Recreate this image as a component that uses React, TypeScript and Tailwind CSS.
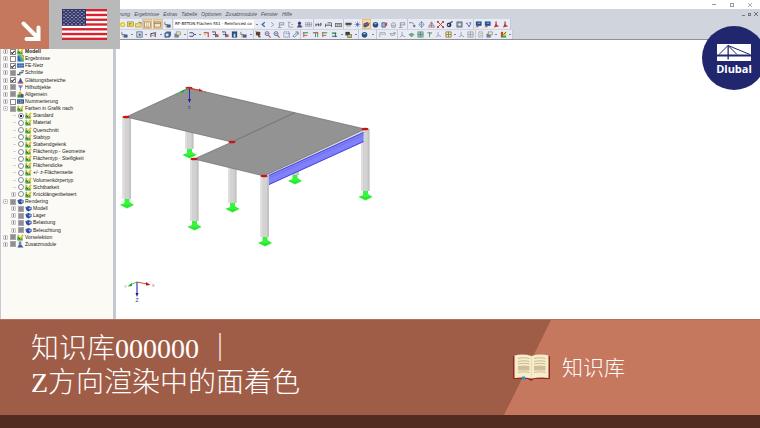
import React, { useState } from "react";
import clsx from "clsx";

const glyphs: Record<string, React.ReactNode> = {
  disc: (
    <>
      <circle cx="3" cy="4" r="3" fill="#e5c83a" />
      <circle cx="3" cy="4" r="1" fill="#fff" />
    </>
  ),
  note: (
    <>
      <rect x="0.5" y="1" width="7" height="5" fill="#f0d650" stroke="#8c7a22" strokeWidth="0.6" />
      <path d="M2 3h3M2 4.500h2" stroke="#4b5f9a" strokeWidth="0.7" />
      <path d="M4 6l2 2V6z" fill="#e5c83a" />
    </>
  ),
  folder: (
    <>
      <path d="M0.500 7V3h2.500l1-1h3v5z" fill="#f3dc66" stroke="#9a8426" strokeWidth="0.6" />
      <path d="M4 1.500h3v1.500" stroke="#5d6c9c" fill="none" strokeWidth="0.7" />
    </>
  ),
  panes: (
    <>
      <rect x="0.5" y="1" width="7" height="6" fill="#f7f0df" stroke="#8a7451" strokeWidth="0.7" />
      <path d="M3 1v6M5 1v6" stroke="#b59a6c" strokeWidth="0.6" />
    </>
  ),
  sheet: (
    <>
      <rect x="0.5" y="1" width="7" height="6" fill="#f4e6c8" stroke="#8a7451" strokeWidth="0.7" />
      <path d="M0.500 2.500h7" stroke="#7b6a4e" strokeWidth="1" />
    </>
  ),
  load: (
    <>
      <path d="M1 1v3h3" stroke="#56627d" fill="none" strokeWidth="0.9" />
      <rect x="3" y="4" width="4.500" height="3.500" fill="#3c5c9c" />
      <circle cx="2.500" cy="6" r="1.200" fill="#e0b32e" />
    </>
  ),
  left: <path d="M5.500 1.500L2.500 4l3 2.500" stroke="#3565ba" strokeWidth="1.400" fill="none" />,
  right: <path d="M2.500 1.500l3 2.500-3 2.500" stroke="#7b9dd8" strokeWidth="1.100" fill="none" />,
  frame: (
    <path d="M1.500 7V2h5M6.500 2v2.500h-5M0 7.500h4" stroke="#7c8595" strokeWidth="0.900" fill="none" />
  ),
  angle: (
    <path d="M1 1.500h3M2 1.500v5.500h5M5 4h2" stroke="#8d95a3" strokeWidth="0.900" fill="none" />
  ),
  person: (
    <>
      <circle cx="4" cy="2.500" r="1.800" fill="#313f78" />
      <path d="M1 7.500l2-3.500h2l2 3.500z" fill="#404b82" />
      <path d="M5 6h2.500" stroke="#c8463f" strokeWidth="1" />
    </>
  ),
  table: (
    <path d="M0.500 2h7v4h-7zM0.500 4h7M3 2v4M5 2v4" stroke="#838c9b" strokeWidth="0.700" fill="none" />
  ),
  link: (
    <path d="M1 3v3M1 5l3-2v3M5 5l2-3M6 6l1.500-3" stroke="#3d4961" strokeWidth="1" fill="none" />
  ),
  bed: (
    <>
      <path d="M0.500 3v4M7.500 2v5M0.500 5h7M3 2h4" stroke="#434d60" strokeWidth="0.900" fill="none" />
      <rect x="2" y="3" width="4" height="2" fill="#a9b2a0" />
    </>
  ),
  ruler: (
    <>
      <rect x="0.500" y="3" width="7" height="3.500" fill="#c7c9bd" stroke="#525c66" strokeWidth="0.800" />
      <path d="M3 3v2M5 3v2" stroke="#525c66" strokeWidth="0.600" />
    </>
  ),
  tray: (
    <>
      <rect x="0.500" y="2" width="7" height="2.500" fill="#3f4857" />
      <rect x="1.500" y="4.500" width="5" height="2" fill="#c4b682" />
    </>
  ),
  star: (
    <>
      <path d="M4 0.500v7M0.500 4h7M1.500 1.500l5 5M6.500 1.500l-5 5" stroke="#8991c9" strokeWidth="0.800" />
      <circle cx="4" cy="4" r="1.300" fill="#4b57a2" />
    </>
  ),
  solid: (
    <>
      <path d="M0.500 3l4-2 3 1.500-1 3-4 2-2-1z" fill="#35588f" />
      <path d="M0.500 3l3 1 4-1.500" stroke="#d7683d" strokeWidth="0.900" fill="none" />
    </>
  ),
  ball: (
    <>
      <circle cx="4" cy="4.200" r="3.200" fill="#2a4c83" />
      <path d="M2 3l2-1 2 1-2 1z" fill="#9ec2e4" />
    </>
  ),
  paint: (
    <>
      <path d="M1 2h4v5H1z" fill="#a3b6d4" stroke="#2d477c" strokeWidth="0.800" />
      <path d="M4 4l3-3v5z" fill="#c8473b" />
    </>
  ),
  home: (
    <path d="M1 4l3-2.500L7 4M2 4v3h4V4M3 5h2" stroke="#7c858c" strokeWidth="0.900" fill="none" />
  ),
  curve: (
    <>
      <path d="M1 2q5-1 5 4" stroke="#8088a0" strokeWidth="1" fill="none" />
      <path d="M4 5h4l-2 2.500z" fill="#526098" />
      <path d="M0 2h2" stroke="#d06554" strokeWidth="0.900" />
    </>
  ),
  target: (
    <>
      <circle cx="4" cy="4" r="2.500" fill="none" stroke="#7286ba" strokeWidth="0.800" />
      <path d="M4 0v8" stroke="#466ab1" strokeWidth="0.700" />
      <path d="M0.500 4h7" stroke="#93a0bd" strokeWidth="0.700" />
    </>
  ),
  tent: (
    <>
      <path d="M0.500 7L4 1l3.500 6z" fill="none" stroke="#a05c66" strokeWidth="0.800" />
      <path d="M4 1v6M2 5h4" stroke="#5d6686" strokeWidth="0.700" />
    </>
  ),
  cross: (
    <>
      <path d="M1 1l6 6M7 1L1 7" stroke="#cd3b38" strokeWidth="1.100" />
      <path d="M0 0h2v2H0zM6 0h2v2H6zM0 6h2v2H0zM6 6h2v2H6z" fill="#8b4a52" />
    </>
  ),
  lens: (
    <>
      <circle cx="3.500" cy="4.500" r="2.700" fill="#25345e" />
      <circle cx="3" cy="4.500" r="1" fill="#d9e1ee" />
      <path d="M5 2l2.500-1.500" stroke="#25345e" strokeWidth="1.200" />
    </>
  ),
  gear: (
    <>
      <rect x="1" y="1" width="6" height="6" fill="#8d96a7" stroke="#4e5a6c" strokeWidth="0.700" />
      <circle cx="4" cy="4" r="1.500" fill="#e4e9ef" />
    </>
  ),
  fan: (
    <>
      <path d="M0.500 2h3l-1 2zM4.500 1.500h3L6 4zM3 5h3L4.500 7.500z" fill="#6a7fc2" />
      <path d="M2 3l3 3 1.500-3" stroke="#3f5188" strokeWidth="0.700" fill="none" />
    </>
  ),
  view: (
    <>
      <rect x="1" y="0.500" width="6.500" height="5" fill="#234d8c" />
      <path d="M3 2.500h3" stroke="#9fd0f1" strokeWidth="1" />
      <path d="M0 7h4V5z" fill="#c94a42" />
    </>
  ),
  pin: (
    <>
      <path d="M3.500 0.500v5" stroke="#762a39" strokeWidth="1.200" />
      <path d="M1 7.500l2-4 4 2.500z" fill="#cf2b31" />
    </>
  ),
  box: (
    <>
      <rect x="1" y="1" width="6" height="6" fill="#e3e8f1" stroke="#4a5876" strokeWidth="0.900" />
      <rect x="3" y="3" width="2.500" height="2.500" fill="#566a94" />
    </>
  ),
  member: (
    <>
      <path d="M1 7V3l5-1v5" stroke="#3a4863" strokeWidth="1.100" fill="none" />
      <path d="M1 3l3 3 3-5" stroke="#b6533f" strokeWidth="0.700" fill="none" />
    </>
  ),
  cube: (
    <>
      <path d="M1 2.500L3 1h4.500v4.500L6 7H1z" fill="#4b699e" stroke="#273c68" strokeWidth="0.700" />
      <rect x="2" y="3" width="3" height="3" fill="#d9e4f3" />
    </>
  ),
  cards: (
    <>
      <rect x="0.500" y="3" width="5" height="4.500" fill="#6c83ac" />
      <rect x="2.500" y="1" width="5" height="3.500" fill="#efe2a2" stroke="#6d7180" strokeWidth="0.600" />
    </>
  ),
  plug: <path d="M0.500 2h4q2.500 2 0 4h-4M6 4h2" stroke="#3a4b6e" strokeWidth="1.100" fill="none" />,
  hook: (
    <>
      <path d="M1 2h5v5" stroke="#c03c37" strokeWidth="1.200" fill="none" />
      <path d="M1 2l2 3" stroke="#e0a53b" strokeWidth="1" />
    </>
  ),
  node: (
    <>
      <path d="M1 1h3v6M1 4h5" stroke="#4a62a0" strokeWidth="1.100" fill="none" />
      <rect x="4.500" y="4" width="3" height="3" fill="#c4583f" />
      <path d="M0 1h2" stroke="#e05c3b" strokeWidth="1.200" />
    </>
  ),
  door: (
    <>
      <rect x="1" y="0.500" width="6" height="7" fill="#2e4a7b" />
      <path d="M3 7V3h2v4" fill="#c9d8ef" />
    </>
  ),
  select: (
    <>
      <path d="M1 1h5v4H1z" fill="#63402b" />
      <path d="M3 3l4 4H4z" fill="#3c3f49" />
      <path d="M0 0.500h4" stroke="#aa8c55" strokeWidth="0.700" />
    </>
  ),
  zoom: (
    <>
      <circle cx="3.500" cy="3" r="2.300" fill="#d4e0f4" stroke="#4561a3" strokeWidth="0.900" />
      <path d="M5 5l2.500 2.500" stroke="#c24b3d" strokeWidth="1.300" />
      <path d="M2 3h3" stroke="#b9453f" strokeWidth="0.700" />
    </>
  ),
  dashed: (
    <path d="M1 1h6v6H1zM3 3h5v5" stroke="#6277a5" strokeWidth="0.900" strokeDasharray="1.500 0.700" fill="none" />
  ),
  clip: (
    <path d="M1 6l4-4 2 1-4 4zM4 1h3v3" stroke="#637296" strokeWidth="0.900" fill="none" />
  ),
  axisG: (
    <>
      <path d="M1 2h6" stroke="#38a25b" strokeWidth="1.300" />
      <path d="M2 2v5M2 5h4" stroke="#d0453d" strokeWidth="1" />
    </>
  ),
  axisR: (
    <>
      <path d="M1 2h6" stroke="#d0453d" strokeWidth="1.300" />
      <path d="M4 2v5M6.500 2v5" stroke="#2c8d62" strokeWidth="1" />
    </>
  ),
  flag: (
    <>
      <path d="M1 1.500h5v2H1z" fill="#42aa67" />
      <path d="M5 2v5M1 6h6" stroke="#3c4b6f" strokeWidth="1" />
    </>
  ),
  hatch: (
    <>
      <rect x="0.500" y="1" width="5" height="4" fill="#31384a" />
      <path d="M3 4h4.500v3.500H3z" fill="#cbbd68" stroke="#45442c" strokeWidth="0.600" />
    </>
  ),
  arch: <path d="M1 7V2h6v3M3 4h2" stroke="#9b9098" strokeWidth="0.900" fill="none" />,
  cup: <path d="M1 3h6l-1.500 2h-3zM5 2h3" stroke="#8e96a0" strokeWidth="0.900" fill="none" />,
  triad: (
    <path d="M3.500 1v4L1 7M3.500 5L7 6.500" stroke="#8b90b5" strokeWidth="0.900" fill="none" />
  ),
  gem: (
    <>
      <path d="M0.500 4L4 2l3.500 2L4 7z" fill="#57a890" />
      <path d="M2 3l2 2 2-2" stroke="#d7a03c" strokeWidth="0.800" fill="none" />
    </>
  ),
  mesh: (
    <>
      <rect x="1" y="1" width="6" height="6" fill="#9fc3a2" stroke="#4d8a6c" strokeWidth="0.700" />
      <path d="M1 4h6M4 1v6" stroke="#3d72a4" strokeWidth="0.700" />
    </>
  ),
  post: <path d="M4 1.500V7M1.500 2h5L5 4" stroke="#57917a" strokeWidth="1" fill="none" />,
  grid: (
    <>
      <path d="M1 1h6v6H1zM1 4h6M4 1v6" stroke="#8a8354" strokeWidth="1" fill="#efe8a8" />
    </>
  ),
  gridGray: (
    <path d="M1 1h6v6H1zM1 4h6M4 1v6" stroke="#949cae" strokeWidth="0.900" fill="#e2e6ee" />
  ),
  page: (
    <path d="M2 1h4.500v6H2zM3 3h2.500M3 5h2.500" stroke="#979da2" strokeWidth="0.800" fill="#eceeed" />
  ),
  swatch: (
    <>
      <path d="M1 1h2.500v6H1z" fill="#d5362f" />
      <path d="M1 5h6v2.500H1z" fill="#3ba343" />
      <path d="M3 3l4-2v4H4z" fill="#e7cf34" />
      <path d="M4 4l3-3" stroke="#333" strokeWidth="0.800" />
    </>
  ),
  pencil: (
    <>
      <path d="M0.500 1h2v6h-2z" fill="#8fc65a" />
      <path d="M0.500 4h6v3.500h-6z" fill="#4fa845" />
      <path d="M3 5.500L7 1" stroke="#e8c22f" strokeWidth="2" />
      <path d="M1.500 4l2 2" stroke="#2f3a22" strokeWidth="1.100" />
    </>
  ),
  rainbow: (
    <>
      <rect x="0.500" y="0.500" width="7" height="7" fill="#2f63c8" />
      <path d="M2 0.500h5.500v7H5z" fill="#43bb6b" />
      <path d="M4.500 0.500h3v5z" fill="#ecd940" />
      <path d="M6 0.500h1.500v2z" fill="#dc4a34" />
    </>
  ),
  blueMesh: (
    <>
      <rect x="0" y="1.500" width="8" height="5" fill="#3c68ae" />
      <path d="M0 4h8M3 1.500v5M5.500 1.500v5" stroke="#8db4e2" strokeWidth="0.500" />
    </>
  ),
  section: (
    <>
      <path d="M1 7l2-4h5L6 5H4z" fill="#5b6f9a" />
      <path d="M0 6.500h4M5 2h3" stroke="#293a62" strokeWidth="1" />
    </>
  ),
  smooth: (
    <>
      <path d="M0.500 6.500q2-1 3-5h1q1 4 3 5z" fill="#425195" />
      <path d="M1 7h6" stroke="#bd4954" strokeWidth="1.200" />
    </>
  ),
  helper: (
    <>
      <path d="M1 1.500h6L5 4.500H3z" fill="#7e8dd3" />
      <path d="M4 3v4.500" stroke="#6074bd" strokeWidth="1" />
    </>
  ),
  general: (
    <>
      <circle cx="3.500" cy="2.500" r="1.800" fill="#d2a928" />
      <rect x="0.500" y="4" width="4" height="3.500" fill="#38923f" />
      <rect x="4.500" y="3.500" width="3" height="4" fill="#2e54a1" />
    </>
  ),
  numbers: (
    <>
      <rect x="0" y="1.500" width="8" height="5" fill="#2f578e" />
      <path d="M1.500 3v2.500M3 3h1.500v2H3M6 3v2.500" stroke="#d7e4f2" strokeWidth="0.600" fill="none" />
    </>
  ),
  render: (
    <>
      <path d="M0.500 2.500L4 1l3.500 1.500v3L4 7.500 1.500 6z" fill="#2948a0" />
      <path d="M4 3.500l2.500-1 .5 2-2 1z" fill="#9db7e8" />
      <path d="M0.500 2.500L4 3.500" stroke="#5f7fcc" strokeWidth="0.600" />
    </>
  ),
  modules: (
    <>
      <path d="M2 0.500h3v4H2z" fill="#6f86c7" />
      <path d="M0.500 7.500l1.500-3h3l2.500 3z" fill="#41589e" />
    </>
  ),
};

const Glyph = ({ name }: { name: string }) => (
  <svg viewBox="0 0 8 8" className="h-[7px] w-[7px] shrink-0" aria-hidden="true">
    {glyphs[name]}
  </svg>
);

const menu = ["Ergebnisse", "Extras", "Tabelle", "Optionen", "Zusatzmodule", "Fenster", "Hilfe"];

type Group = { width: string; items: string[]; active?: string[] };

const files: Group[] = [
  { width: "w-[23px]", items: ["disc", "note", "folder"] },
  { width: "w-[20px]", items: ["panes", "sheet"], active: ["panes", "sheet"] },
  { width: "w-[10px]", items: ["load"] },
];

const display: Group[] = [
  { width: "w-[55px]", items: ["left", "right", "frame", "angle", "person", "table"] },
  { width: "w-[30px]", items: ["link", "bed", "ruler"] },
  {
    width: "w-[64px]",
    items: ["tray", "star", "solid", "ball", "paint", "home", "frame"],
    active: ["solid"],
  },
  { width: "w-[66px]", items: ["curve", "target", "tent", "cross", "lens", "gear", "fan"] },
  { width: "w-[37px]", items: ["view", "view", "pin", "pin"] },
];

// "v" is the small arrow next to a tool that opens a list
const tools: Group[] = [
  { width: "w-[68px]", items: ["load", "v", "box", "v", "member", "v", "cube", "cards", "v"] },
  { width: "w-[66px]", items: ["plug", "v", "hook", "node", "node", "door", "load", "v"] },
  { width: "w-[47px]", items: ["select", "zoom", "zoom", "dashed", "clip"] },
  { width: "w-[58px]", items: ["axisG", "axisR", "axisG", "flag", "v", "hatch", "v"] },
  { width: "w-[18px]", items: ["ball", "v"] },
  { width: "w-[21px]", items: ["arch", "cup"] },
  {
    width: "w-[78px]",
    items: ["triad", "gem", "mesh", "post", "triad", "grid", "v", "triad", "gridGray"],
  },
  { width: "w-[37px]", items: ["page", "cards", "v", "swatch", "v"] },
];

const ToolGroup = ({ group }: { group: Group }) => (
  <div
    className={clsx(
      "flex shrink-0 items-center justify-around border-r border-[#c3c9d6]",
      group.width
    )}
  >
    {group.items.map((item, i) =>
      item === "v" ? (
        <button key={i} type="button" aria-label="Liste" className="h-px w-[2px] bg-[#7b8291]" />
      ) : (
        <button
          key={i}
          type="button"
          aria-label={item}
          className={clsx(
            "flex h-[8px] items-center",
            group.active?.includes(item) && "bg-[#fbd99e] outline outline-[#e6bd82]"
          )}
        >
          <Glyph name={item} />
        </button>
      )
    )}
  </div>
);

type Row = {
  label: string;
  icon: string;
  state: "on" | "off" | "mixed" | "radio";
  sub?: boolean;
  open?: boolean;
  leaf?: boolean;
};

const colorModes = [
  "Standard",
  "Material",
  "Querschnitt",
  "Stabtyp",
  "Stabendgelenk",
  "Flächentyp - Geometrie",
  "Flächentyp - Steifigkeit",
  "Flächendicke",
  "+/- z-Flächenseite",
  "Volumenkörpertyp",
  "Sichtbarkeit",
  "Knicklängenbeiwert",
];

const rows: Row[] = [
  { label: "Modell", icon: "pencil", state: "on" },
  { label: "Ergebnisse", icon: "rainbow", state: "off" },
  { label: "FE-Netz", icon: "blueMesh", state: "on" },
  { label: "Schnitte", icon: "section", state: "mixed" },
  { label: "Glättungsbereiche", icon: "smooth", state: "on" },
  { label: "Hilfsobjekte", icon: "helper", state: "mixed" },
  { label: "Allgemein", icon: "general", state: "mixed" },
  { label: "Nummerierung", icon: "numbers", state: "off" },
  { label: "Farben in Grafik nach", icon: "pencil", state: "mixed", open: true },
  ...colorModes.map(
    (label): Row => ({
      label,
      icon: "pencil",
      state: "radio",
      sub: true,
      leaf: label !== "Knicklängenbeiwert",
    })
  ),
  { label: "Rendering", icon: "render", state: "mixed", open: true },
  { label: "Modell", icon: "render", state: "mixed", sub: true },
  { label: "Lager", icon: "render", state: "mixed", sub: true },
  { label: "Belastung", icon: "render", state: "mixed", sub: true },
  { label: "Beleuchtung", icon: "render", state: "mixed", sub: true },
  { label: "Vorselektion", icon: "pencil", state: "mixed" },
  { label: "Zusatzmodule", icon: "modules", state: "mixed" },
];

const Navigator = () => {
  const [mode, setMode] = useState("Standard");

  return (
    <aside className="w-[116px] shrink-0 border-r-3 border-l border-r-[#c3c8d1] border-l-[#cfc6d4] bg-[#fbfaf4] pt-[8px]">
      <ul className="grid h-[200px] auto-rows-fr pl-[2px]">
        {rows.map((row, i) => (
          <li
            key={i}
            className={clsx("flex min-h-0 items-center gap-[2px]", row.sub && "pl-[8px]")}
          >
            {row.leaf ? (
              <span className="ml-[2px] h-px w-[3px] bg-[#d5d5d5]" />
            ) : (
              <button
                type="button"
                aria-label="Zweig"
                className="flex h-[5px] w-[5px] items-center justify-center rounded-[1px] border border-[#c8c8cc] bg-[#f2f2f2]"
              >
                <span className={clsx("w-px bg-[#888]", row.open ? "h-px" : "h-[3px]")} />
              </button>
            )}
            <label className="flex items-center gap-px">
              {row.state === "radio" ? (
                <input
                  type="radio"
                  name="mode"
                  checked={mode === row.label}
                  onChange={() => setMode(row.label)}
                  className="flex h-[6px] w-[6px] appearance-none items-center justify-center rounded-full border border-[#858b98] bg-white checked:before:h-[2px] checked:before:w-[2px] checked:before:bg-[#1c2536]"
                />
              ) : (
                <input
                  type="checkbox"
                  defaultChecked={row.state === "on"}
                  className={clsx(
                    "flex h-[6px] w-[6px] appearance-none items-center justify-center border",
                    "checked:before:h-[4px] checked:before:w-[2px] checked:before:rotate-45 checked:before:border-r checked:before:border-b checked:before:border-[#222]",
                    row.state === "mixed"
                      ? "border-[#a9a9ac] bg-[#8f8f93]"
                      : "border-[#8a8a8e] bg-white"
                  )}
                />
              )}
              <Glyph name={row.icon} />
              <span
                className={clsx(
                  "text-[5px] leading-[7px] whitespace-nowrap text-[#222]",
                  i === 0 && "font-bold"
                )}
              >
                {row.label}
              </span>
            </label>
          </li>
        ))}
      </ul>
    </aside>
  );
};

const Column = ({ x, top, bottom }: { x: number; top: number; bottom: number }) => (
  <g>
    <path d={`M${x - 2} ${bottom - 1}h5v4l4.500 3-7 3.500-7-3.500 4.500-2z`} fill="#35f53c" />
    <path d={`M${x - 6.5} ${bottom + 5}l7 3.500 7-3.500-7 1.500z`} fill="#2be034" />
    <rect x={x - 4} y={top} width="8.500" height={bottom - top} fill="#d2d2d2" />
    <rect x={x - 4} y={top} width="2" height={bottom - top} fill="#dedede" />
    <rect x={x + 2.5} y={top} width="2" height={bottom - top} fill="#c3c3c3" />
  </g>
);

const corners = [
  [126, 117],
  [189, 88],
  [232, 142],
  [194, 159],
  [264, 176],
  [365, 129],
];

const Model = () => (
  <svg viewBox="116 40 284 270" className="h-[270px] w-[284px]" role="img" aria-label="Modell">
    <Column x={189} top={120} bottom={149} />
    <Column x={232} top={160} bottom={203} />
    <Column x={294.5} top={160} bottom={175} />
    <Column x={126.5} top={117} bottom={199} />
    <Column x={194} top={159} bottom={221} />
    <Column x={365} top={129} bottom={191} />
    <Column x={264.5} top={176} bottom={237} />
    <path d="M264 176L365 129l-2 4-94 43z" fill="#d9d9d9" />
    <path
      d="M126 117L189 88l176 41-101 47-70-17 38-17z"
      fill="#939393"
      stroke="#6b6b6b"
      strokeWidth="0.700"
    />
    <path d="M232 142l63-29.500" stroke="#5e5e5e" strokeWidth="0.600" />
    <path d="M269 175l94.500-43v10L269 185z" fill="#8080fb" />
    <path d="M269 175.500l94.500-43M269 184.500l94.500-43" stroke="#4a4ad9" strokeWidth="1" />
    <path d="M269 178l94.500-43" stroke="#6565ea" strokeWidth="0.600" />
    {corners.map(([x, y]) => (
      <ellipse key={`${x}-${y}`} cx={x} cy={y} rx="3.500" ry="1.300" fill="#c91414" />
    ))}

    <path d="M189 88l-9 4" stroke="#21c22c" strokeWidth="0.900" />
    <path d="M184 89.500l-4 3.500 4-1z" fill="#1fa52a" />
    <path d="M189 88l12 2.500" stroke="#dd2222" strokeWidth="0.900" />
    <path d="M199 88.500l4 2.500-4 .5z" fill="#d01414" />
    <path d="M189.500 89v12" stroke="#2a2ac4" strokeWidth="1" />
    <path d="M188 99h3l-1.500 4z" fill="#1d1da6" />
    <text x="204" y="93" fontSize="4" fill="#e03a3a">x</text>
    <text x="176" y="95" fontSize="4" fill="#21c22c">y</text>
    <text x="188" y="109" fontSize="5" fill="#3030b8">z</text>

    <path d="M137 282l-7 3" stroke="#2fcf3a" strokeWidth="0.900" />
    <path d="M132 283l-4.500 3.500 4.500-.5z" fill="#16a322" />
    <path d="M137 282l10 2" stroke="#d62a2a" strokeWidth="0.900" />
    <path d="M146 282l4.500 3-4.500 .5z" fill="#b81414" />
    <path d="M137 282v12" stroke="#3a3ac0" strokeWidth="1.200" />
    <path d="M135.500 293h3l-1.500 4z" fill="#1616a0" />
    <text x="152" y="287" fontSize="4" fill="#c94040">X</text>
    <text x="124" y="288" fontSize="4" fill="#37c442">Y</text>
    <text x="135.500" y="302" fontSize="5" fill="#333380">Z</text>
  </svg>
);

const Flag = () => (
  <svg viewBox="0 0 45 31" className="h-[31px] w-[45px]" role="img" aria-label="USA">
    <rect width="45" height="31" fill="#fff" />
    {[0, 1, 2, 3, 4, 5, 6].map((n) => (
      <rect key={n} y={(n * 2 * 31) / 13} width="45" height={31 / 13} fill="#d8232f" />
    ))}
    <rect width="24" height="16.700" fill="#33366b" />
    {Array.from({ length: 9 }, (_, r) =>
      Array.from({ length: r % 2 ? 5 : 6 }, (_, c) => (
        <circle
          key={`${r}-${c}`}
          cx={2 + c * 4 + (r % 2 ? 2 : 0)}
          cy={1.6 + r * 1.7}
          r="0.600"
          fill="#e6e8f4"
        />
      ))
    )}
  </svg>
);

const Book = () => (
  <svg viewBox="0 0 37 27" className="h-[27px] w-[37px]" aria-hidden="true">
    <path d="M0 2h37v23H21l-2 1.500h-2L15 25H0z" fill="#8f2a22" />
    <path
      d="M1.500 1.500Q10-.5 18.500 2 27-.5 35.500 1.500V24Q27 23 18.500 24.500 10 23 1.500 24z"
      fill="#f8edcb"
    />
    <path d="M18.500 2v22" stroke="#e9dbb2" strokeWidth="1" />
    <path
      d="M5 4.500q6-1.500 11.500 0M5 7.500q6-1.500 11.500 0M5 10q6-1.500 11.500 0M5 18.500q6-1.500 11.500 0M21 4.500q6-1.500 11.500 0M21 7.500q6-1.500 11.500 0M21 10q6-1.500 11.500 0M21 18.500q6-1.500 11.500 0"
      stroke="#c9bb94"
      strokeWidth="1.200"
      fill="none"
    />
    <path d="M5 12q6-1 11.500 0v4.500H5zM21 12q6-1 11.500 0v4.500H21z" fill="#cdbf98" />
    <path d="M9 22.500h3v3H9z" fill="#159ad8" />
  </svg>
);

export default function App() {
  return (
    <div className="relative flex min-h-screen flex-col overflow-hidden bg-white font-['Liberation_Sans',sans-serif]">
      <header className="flex h-[40px] shrink-0 flex-col border-b border-[#8d9096] bg-[#d0d4dd]">
        <div className="flex h-[9px] shrink-0 items-center justify-end gap-[14px] bg-white pr-[8px]">
          <button type="button" aria-label="Minimieren" className="h-px w-[4px] bg-[#999]" />
          <button type="button" aria-label="Verkleinern" className="h-[4px] w-[4px] border border-[#999]" />
          <button type="button" aria-label="Schließen">
            <svg viewBox="0 0 4 4" className="h-[4px] w-[4px]">
              <path d="M0 0l4 4M4 0L0 4" stroke="#888" strokeWidth="0.700" />
            </svg>
          </button>
        </div>
        <div className="flex h-[10px] shrink-0 items-center pr-[2px] pl-[119px]">
          <nav className="flex flex-1 gap-[4px] text-[5px] leading-[10px] text-[#4a4f5c] italic">
            <a href="#">nung</a>
            {menu.map((item) => (
              <a key={item} href="#">
                {item}
              </a>
            ))}
          </nav>
          <div className="flex items-center gap-[3px]">
            <button type="button" aria-label="Fenster minimieren" className="mt-[3px] h-px w-[3px] bg-[#777]" />
            <button type="button" aria-label="Fenster verkleinern" className="h-[3px] w-[3px] border border-[#777]" />
            <button type="button" aria-label="Fenster schließen">
              <svg viewBox="0 0 4 4" className="h-[4px] w-[4px]">
                <path d="M0 0l4 4M4 0L0 4" stroke="#666" strokeWidth="0.900" />
              </svg>
            </button>
          </div>
        </div>
        <div className="flex h-[10px] shrink-0 self-start rounded-r-[2px] bg-[#e8ebf3] pl-[120px]">
          {files.map((group, i) => (
            <ToolGroup key={i} group={group} />
          ))}
          <div className="flex w-[86px] items-center gap-[2px] pl-px">
            <select
              aria-label="Lastfall"
              className="h-[8px] w-[80px] appearance-none bg-white pl-px font-['DejaVu_Sans',sans-serif] text-[4px] leading-[8px] text-black"
            >
              <option>RF-BETON Flächen FA1 - Reinforced co</option>
            </select>
            <span className="h-px w-[2px] bg-[#7b8291]" />
          </div>
          {display.map((group, i) => (
            <ToolGroup key={i} group={group} />
          ))}
        </div>
        <div className="flex h-[10px] shrink-0 self-start rounded-r-[2px] border-t border-[#d0d4dd] bg-[#e8ebf3] pl-[120px]">
          {tools.map((group, i) => (
            <ToolGroup key={i} group={group} />
          ))}
        </div>
      </header>

      <main className="flex flex-1">
        <Navigator />
        <section className="flex-1">
          <Model />
        </section>
      </main>

      <footer className="shrink-0 border-b-13 border-[#522c20] bg-[#9f5d47] text-white">
        <div className="flex min-h-[96px] border-t border-[#b5705c] font-['Liberation_Serif','Noto_Sans_CJK_SC',serif] font-light">
          <h1 className="flex-1 pt-[12px] pl-[31px] text-[28px] leading-[34px]">
            知识库000000 ｜
            <br />
            Z方向渲染中的面着色
          </h1>
          <div className="relative w-[256px]">
            <div className="absolute inset-0 bg-[#c5785d] [clip-path:polygon(47px_0,100%_0,100%_100%,0_100%)]" />
            <div className="relative flex h-full items-center gap-[12px] pl-[9px]">
              <Book />
              <p className="text-[21px] leading-[34px]">知识库</p>
            </div>
          </div>
        </div>
      </footer>

      <div className="absolute top-0 left-0 flex h-[49px]">
        <div className="w-[49px] bg-[#c5785d]">
          <svg viewBox="0 0 49 49" className="h-[49px] w-[49px]" aria-hidden="true">
            <path
              d="M23.500 23.500l15 15M38.500 27.500v11.500H26.500"
              stroke="#fff"
              strokeWidth="4"
              strokeLinecap="round"
              fill="none"
            />
          </svg>
        </div>
        <div className="flex w-[71px] items-center justify-center bg-[#b9b9b9]">
          <Flag />
        </div>
      </div>

      <a
        href="#"
        className="absolute top-[26px] right-[-6px] flex h-[64px] w-[64px] flex-col items-center rounded-full bg-[#20276f] pt-[18px] text-white"
      >
        <svg viewBox="0 0 34 17" className="h-[17px] w-[34px]" aria-hidden="true">
          <path d="M0 0h34v10.500H0zM0 12.500h34V17H0z" fill="#fff" />
          <path
            d="M11 1.500L2 10.500M11 1.500l9 9M11 1.500l22 9"
            stroke="#20276f"
            strokeWidth="1"
            fill="none"
          />
          <path d="M10.500 1.500h1.300v14h-1.300z" fill="#20276f" />
        </svg>
        <span className="font-['Open_Sans',sans-serif] text-[11px] leading-[16px] font-bold">
          Dlubal
        </span>
      </a>
    </div>
  );
}
